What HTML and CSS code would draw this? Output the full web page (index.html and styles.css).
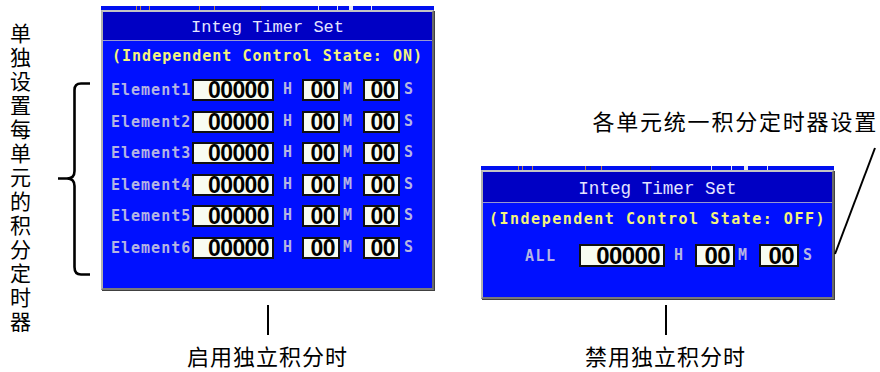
FILE: index.html
```html
<!DOCTYPE html>
<html lang="zh-CN">
<head>
    <meta charset="UTF-8">
    <title>积分定时器设置</title>
    <link rel="stylesheet" href="styles.css">
</head>
<body>
    <div class="figure">
        <div class="side-note">单独设置每单元的积分定时器</div>

        <svg class="brace" width="61" height="372" viewBox="0 0 61 372">
            <path d="M50 83.5 H41 Q34.5 83.5 34.5 90 V171 Q34.5 178.5 27 178.5 H18 M27 178.5 Q34.5 178.5 34.5 186 V267 Q34.5 274.5 41 274.5 H50"
                  fill="none" stroke="#000" stroke-width="2.6"/>
        </svg>

        <!-- 启用独立积分时 -->
        <div class="col col-left">
            <div class="panel">
                <div class="strip">
                    <i class="tick orange" style="margin-left:35px"></i>
                    <i class="tick orange" style="margin-left:3px"></i>
                    <i class="tick orange" style="margin-left:8px"></i>
                    <i class="tick orange" style="margin-left:49px"></i>
                    <i class="tick orange" style="margin-left:14px"></i>
                    <i class="tick dark" style="margin-left:45px"></i>
                    <i class="tick white" style="margin-left:57px"></i>
                    <i class="tick white" style="margin-left:18px"></i>
                    <i class="tick white wide" style="margin-left:11px"></i>
                    <i class="tick white" style="margin-left:18px"></i>
                </div>
                <div class="frame">
                    <div class="title">Integ Timer Set</div>
                    <div class="body">
                        <div class="state">(Independent Control State: ON)</div>
                        <div class="rows">
                            <div class="row">
                                <span class="label">Element1</span>
                                <span class="field hours">00000</span><span class="unit u-h">H</span>
                                <span class="field mins">00</span><span class="unit u-m">M</span>
                                <span class="field secs">00</span><span class="unit u-s">S</span>
                            </div>
                            <div class="row">
                                <span class="label">Element2</span>
                                <span class="field hours">00000</span><span class="unit u-h">H</span>
                                <span class="field mins">00</span><span class="unit u-m">M</span>
                                <span class="field secs">00</span><span class="unit u-s">S</span>
                            </div>
                            <div class="row">
                                <span class="label">Element3</span>
                                <span class="field hours">00000</span><span class="unit u-h">H</span>
                                <span class="field mins">00</span><span class="unit u-m">M</span>
                                <span class="field secs">00</span><span class="unit u-s">S</span>
                            </div>
                            <div class="row">
                                <span class="label">Element4</span>
                                <span class="field hours">00000</span><span class="unit u-h">H</span>
                                <span class="field mins">00</span><span class="unit u-m">M</span>
                                <span class="field secs">00</span><span class="unit u-s">S</span>
                            </div>
                            <div class="row">
                                <span class="label">Element5</span>
                                <span class="field hours">00000</span><span class="unit u-h">H</span>
                                <span class="field mins">00</span><span class="unit u-m">M</span>
                                <span class="field secs">00</span><span class="unit u-s">S</span>
                            </div>
                            <div class="row">
                                <span class="label">Element6</span>
                                <span class="field hours">00000</span><span class="unit u-h">H</span>
                                <span class="field mins">00</span><span class="unit u-m">M</span>
                                <span class="field secs">00</span><span class="unit u-s">S</span>
                            </div>
                        </div>
                    </div>
                </div>
            </div>
            <div class="lead"></div>
            <div class="caption">启用独立积分时</div>
        </div>

        <!-- 禁用独立积分时 -->
        <div class="col col-right">
            <div class="caption top-caption">各单元统一积分定时器设置</div>
            <div class="panel panel-all">
                <div class="strip">
                    <i class="tick orange" style="margin-left:37px"></i>
                    <i class="tick orange" style="margin-left:3px"></i>
                    <i class="tick orange" style="margin-left:9px"></i>
                    <i class="tick orange" style="margin-left:52px"></i>
                    <i class="tick orange" style="margin-left:15px"></i>
                    <i class="tick dark" style="margin-left:48px"></i>
                    <i class="tick white" style="margin-left:60px"></i>
                    <i class="tick white" style="margin-left:19px"></i>
                    <i class="tick white wide" style="margin-left:12px"></i>
                    <i class="tick white" style="margin-left:19px"></i>
                </div>
                <div class="frame">
                    <div class="title">Integ Timer Set</div>
                    <div class="body">
                        <div class="state">(Independent Control State: OFF)</div>
                        <div class="rows">
                            <div class="row">
                                <span class="label">ALL</span>
                                <span class="field hours">00000</span><span class="unit u-h">H</span>
                                <span class="field mins">00</span><span class="unit u-m">M</span>
                                <span class="field secs">00</span><span class="unit u-s">S</span>
                            </div>
                        </div>
                    </div>
                </div>
            </div>
            <div class="bottom-note">
                <div class="lead"></div>
                <div class="caption">禁用独立积分时</div>
            </div>

            <svg class="pointer" width="399" height="372" viewBox="0 0 399 372">
                <line x1="394" y1="148" x2="354" y2="254" stroke="#000" stroke-width="2"/>
            </svg>
        </div>
    </div>
</body>
</html>
```

FILE: styles.css
```css
*{
    margin: 0;
    padding: 0;
    box-sizing: border-box;
}

body{
    background: #fff;
    font-family: "Noto Sans CJK SC", "Noto Sans", sans-serif;
    color: #000;
}

.figure{
    display: flex;
    width: 880px;
    height: 372px;
}

/* 左侧竖排说明 */
.side-note{
    width: 40px;
    padding: 20px 0 0 10px;
    font-size: 21px;
    line-height: 24px;
    word-break: break-all;
}

.brace{
    display: block;
    flex: none;
}

.col{
    display: flex;
    flex-direction: column;
    flex: none;
}

.col-left{
    width: 333px;
    padding-top: 6px;
    align-items: center;
}

.col-right{
    width: 399px;
    margin-left: 47px;
    position: relative;
}

/* 面板 */
.panel{
    width: 333px;
}

.strip{
    display: flex;
    height: 4px;
    background: #0010f0;
}

.tick{
    display: block;
    width: 1px;
    height: 4px;
}

.tick.orange{ background: #c08040; }
.tick.dark{ background: #202060; }
.tick.white{ background: #e8e8f0; }
.tick.wide{ width: 4px; }

.frame{
    border: 2px solid;
    border-color: #c4c4c4 #6a6a6a #7a7a7a #b0b0b0;
    box-shadow: 1px 1px 0 #404040;
    background: #0010ff;
}

.title{
    height: 29px;
    padding-top: 3px;
    background: #0000c4;
    border-bottom: 1px solid #9898d0;
    color: #e4e4ff;
    font-family: "Liberation Mono", monospace;
    font-size: 17px;
    line-height: 25px;
    text-align: center;
}

.body{
    height: 247px;
    padding-top: 5px;
    font-family: "DejaVu Sans Mono", monospace;
    font-weight: bold;
    font-size: 15px;
    letter-spacing: 1px;
}

.state{
    height: 20px;
    line-height: 20px;
    color: #f4f47c;
    text-align: center;
}

.rows{
    display: flex;
    flex-direction: column;
    gap: 9.6px;
    margin-top: 13px;
    padding-left: 8px;
}

.row{
    display: flex;
    align-items: center;
    height: 22px;
}

.label,
.unit{
    color: #b4b4e4;
}

.label{
    width: 81px;
}

.field{
    height: 22px;
    background: #f8fcf2;
    border: 2px solid #101010;
    padding-right: 3px;
    color: #000;
    font-family: "Liberation Sans", sans-serif;
    font-size: 23px;
    line-height: 18px;
    letter-spacing: -0.6px;
    text-align: right;
}

.hours{ width: 82px; }
.mins{ width: 38px; }
.secs{ width: 37px; }

.unit{
    margin-top: -2px;
}

.u-h{ width: 28px; padding-left: 9px; }
.u-m{ width: 23px; padding-left: 3px; }
.u-s{ padding-left: 4px; }

/* 统一设置面板 */
.panel-all{
    width: 353px;
    margin-top: 34px;
}

.panel-all .title{
    height: 31px;
    padding-top: 4px;
    line-height: 26px;
    font-size: 17.6px;
}

.panel-all .body{
    height: 94px;
    padding-top: 6px;
    letter-spacing: 1.5px;
}

.panel-all .rows{
    margin-top: 15px;
    padding-left: 42px;
}

.panel-all .row{
    height: 23px;
}

.panel-all .label{ width: 54px; }
.panel-all .field{ height: 23px; font-size: 24px; line-height: 19px; }
.panel-all .hours{ width: 86px; }
.panel-all .mins{ width: 40px; }
.panel-all .secs{ width: 40px; }
.panel-all .u-h{ width: 30px; }
.panel-all .u-m{ width: 24px; }

/* 引线与说明 */
.lead{
    width: 2px;
    height: 30px;
    margin-top: 15px;
    background: #000;
}

.caption{
    margin-top: 7px;
    font-size: 22px;
    line-height: 26px;
    letter-spacing: 1px;
    white-space: nowrap;
}

.top-caption{
    margin-top: 108px;
    text-align: right;
    padding-right: 2px;
    line-height: 24px;
    letter-spacing: 1.8px;
}

.bottom-note{
    display: flex;
    flex-direction: column;
    align-items: center;
    width: 353px;
    padding-left: 16px;
}

.bottom-note .lead{
    margin-top: 6px;
}

.pointer{
    position: absolute;
    left: 0;
    top: 0;
    pointer-events: none;
}
```
